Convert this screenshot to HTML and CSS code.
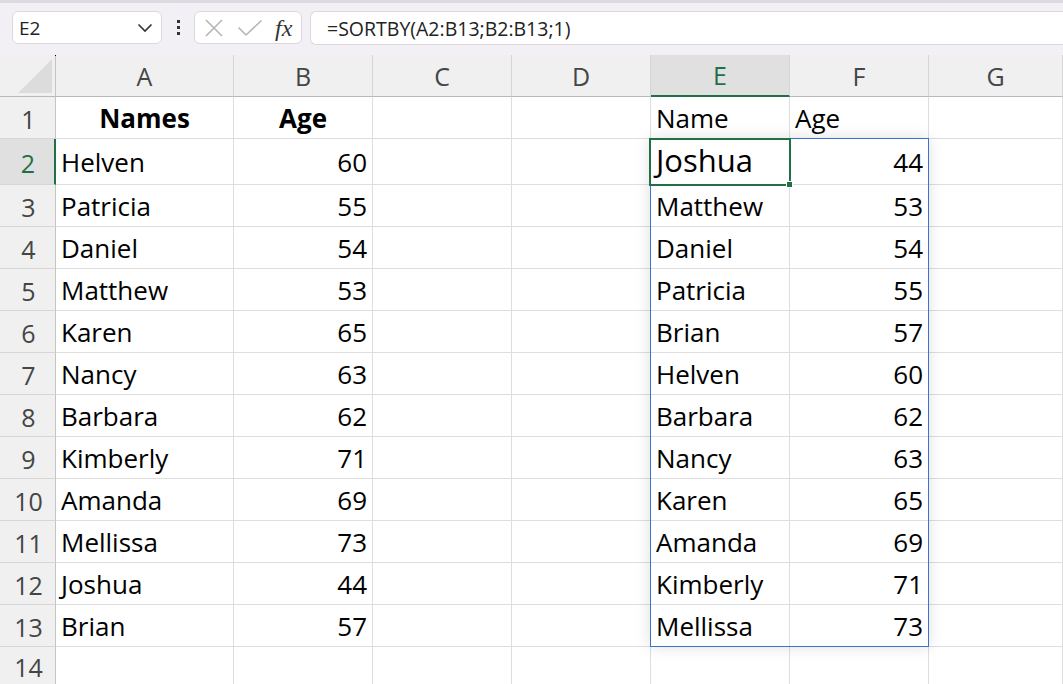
FILE: index.html
```html
<!DOCTYPE html>
<html>
<head>
<meta charset="utf-8">
<link rel="stylesheet" href="styles.css">
</head>
<body>
<div class="app">
  <div class="topline"></div>
  <div class="fbar">
    <div class="namebox">
      <span class="nb-text">E2</span>
      <svg class="chev" width="16" height="10" viewBox="0 0 16 10"><path d="M1.5 1.5 L8 8 L14.5 1.5" fill="none" stroke="#333" stroke-width="1.6"/></svg>
    </div>
    <div class="vdots"><span></span><span></span><span></span></div>
    <div class="iconbox">
      <svg width="20" height="20" viewBox="0 0 20 20"><path d="M2 2 L18 18 M18 2 L2 18" stroke="#b4b4b4" stroke-width="1.6" fill="none"/></svg>
      <svg width="26" height="18" viewBox="0 0 26 18"><path d="M1.5 8.5 L9 16 L24.5 1.5" stroke="#b4b4b4" stroke-width="1.6" fill="none"/></svg>
      <span class="fx">fx</span>
    </div>
    <div class="formula">=SORTBY(A2:B13;B2:B13;1)</div>
  </div>
  <div class="sheet">
    <div class="grid">
      <div class="corner"><div class="tri"></div></div>
      <div class="ch">A</div><div class="ch">B</div><div class="ch">C</div><div class="ch">D</div><div class="ch sel">E</div><div class="ch">F</div><div class="ch">G</div>

      <div class="rh">1</div>
      <div class="c bold ctr">Names</div><div class="c bold ctr">Age</div><div class="c"></div><div class="c"></div><div class="c">Name</div><div class="c">Age</div><div class="c"></div>

      <div class="rh sel">2</div>
      <div class="c r2">Helven</div><div class="c num r2">60</div><div class="c"></div><div class="c"></div><div class="c big">Joshua</div><div class="c num r2">44</div><div class="c"></div>

      <div class="rh">3</div>
      <div class="c">Patricia</div><div class="c num">55</div><div class="c"></div><div class="c"></div><div class="c">Matthew</div><div class="c num">53</div><div class="c"></div>

      <div class="rh">4</div>
      <div class="c">Daniel</div><div class="c num">54</div><div class="c"></div><div class="c"></div><div class="c">Daniel</div><div class="c num">54</div><div class="c"></div>

      <div class="rh">5</div>
      <div class="c">Matthew</div><div class="c num">53</div><div class="c"></div><div class="c"></div><div class="c">Patricia</div><div class="c num">55</div><div class="c"></div>

      <div class="rh">6</div>
      <div class="c">Karen</div><div class="c num">65</div><div class="c"></div><div class="c"></div><div class="c">Brian</div><div class="c num">57</div><div class="c"></div>

      <div class="rh">7</div>
      <div class="c">Nancy</div><div class="c num">63</div><div class="c"></div><div class="c"></div><div class="c">Helven</div><div class="c num">60</div><div class="c"></div>

      <div class="rh">8</div>
      <div class="c">Barbara</div><div class="c num">62</div><div class="c"></div><div class="c"></div><div class="c">Barbara</div><div class="c num">62</div><div class="c"></div>

      <div class="rh">9</div>
      <div class="c">Kimberly</div><div class="c num">71</div><div class="c"></div><div class="c"></div><div class="c">Nancy</div><div class="c num">63</div><div class="c"></div>

      <div class="rh">10</div>
      <div class="c">Amanda</div><div class="c num">69</div><div class="c"></div><div class="c"></div><div class="c">Karen</div><div class="c num">65</div><div class="c"></div>

      <div class="rh">11</div>
      <div class="c">Mellissa</div><div class="c num">73</div><div class="c"></div><div class="c"></div><div class="c">Amanda</div><div class="c num">69</div><div class="c"></div>

      <div class="rh">12</div>
      <div class="c">Joshua</div><div class="c num">44</div><div class="c"></div><div class="c"></div><div class="c">Kimberly</div><div class="c num">71</div><div class="c"></div>

      <div class="rh">13</div>
      <div class="c">Brian</div><div class="c num">57</div><div class="c"></div><div class="c"></div><div class="c">Mellissa</div><div class="c num">73</div><div class="c"></div>

      <div class="rh last">14</div>
      <div class="c"></div><div class="c"></div><div class="c"></div><div class="c"></div><div class="c"></div><div class="c"></div><div class="c"></div>
    </div>
    <div class="spill"></div>
    <div class="active"><div class="handle"></div></div>
    <div class="dot"></div>
  </div>
</div>
</body>
</html>
```
FILE: styles.css
```css
* { box-sizing: border-box; }
html, body { margin: 0; padding: 0; }
body { width: 1063px; height: 684px; overflow: hidden; background: #fff; font-family: "Open Sans", "Liberation Sans", sans-serif; }
.app { width: 1063px; height: 684px; overflow: hidden; display: flex; flex-direction: column; }
.topline { height: 3px; background: #dedae1; flex: none; }
.fbar { height: 52px; flex: none; background: #f3f0f5; display: flex; align-items: flex-start; padding: 8px 0 0 12px; }
.namebox { width: 150px; height: 33px; background: #fff; border: 1px solid #dcd8de; border-radius: 6px; display: flex; align-items: center; justify-content: space-between; padding: 0 8px 0 6px; }
.nb-text { font-family: "Open Sans", "Liberation Sans", sans-serif; font-size: 19px; color: #222; }
.vdots { width: 32px; height: 33px; display: flex; flex-direction: column; align-items: center; justify-content: center; gap: 3px; }
.vdots span { width: 3px; height: 3px; background: #333; }
.iconbox { width: 108px; height: 33px; background: #fff; border: 1px solid #dcd8de; border-radius: 6px; display: flex; align-items: center; padding: 0 6px 0 9px; gap: 0; }
.iconbox svg:first-child { margin-right: 13px; }
.iconbox svg:nth-child(2) { margin-right: 12px; }
.fx { font-family: "Liberation Serif", serif; font-style: italic; font-size: 24px; color: #333; line-height: 1; }
.formula { flex: 1; margin-left: 8px; height: 34px; background: #fff; border: 1px solid #dcd8de; border-right: none; border-radius: 6px 0 0 6px; display: flex; align-items: center; padding-left: 16px; font-family: "Open Sans", "Liberation Sans", sans-serif; font-size: 19.5px; color: #222; }
.sheet { position: relative; flex: 1; }
.grid { display: grid; grid-template-columns: 56px 178px 139px 139px 139px 139px 139px 134px; grid-template-rows: 42px 42px 46px repeat(11, 42px) 42px; }
.corner { background: #f0f0f0; border-right: 1px solid #c4c4c4; border-bottom: 1px solid #b9b9b9; position: relative; }
.tri { position: absolute; left: 18px; top: 4px; width: 34px; height: 34px; background: #dcdcdc; clip-path: polygon(100% 0, 100% 100%, 0 100%); }
.ch { background: #f0f0f0; border-right: 1px solid #d6d6d6; border-bottom: 1px solid #b9b9b9; display: flex; align-items: center; justify-content: center; font-family: "Open Sans", "Liberation Sans", sans-serif; font-size: 25px; color: #454545; }
.ch.sel { background: #e0e0e0; color: #1f7145; border-bottom: 2px solid #1f7145; }
.rh { background: #f0f0f0; border-right: 1px solid #c4c4c4; border-bottom: 1px solid #d6d6d6; display: flex; align-items: flex-end; justify-content: center; padding-bottom: 6px; padding-left: 2px; font-family: "Open Sans", "Liberation Sans", sans-serif; font-size: 25px; color: #454545; line-height: 1; }
.rh.sel { background: #e0e0e0; color: #1f7145; border-right: 2px solid #1f7145; padding-bottom: 8px; }
.rh.last { align-items: flex-start; padding-top: 8px; padding-bottom: 0; }
.c { border-right: 1px solid #dedede; border-bottom: 1px solid #dedede; display: flex; align-items: flex-end; padding: 0 5px 7px 5px; font-size: 26px; color: #000; line-height: 1; white-space: nowrap; overflow: visible; }
.c.r2 { padding-bottom: 9px; }
.c.num { justify-content: flex-end; }
.c.ctr { justify-content: center; }
.c.bold { font-weight: 700; }
.c.big { font-size: 31px; padding-bottom: 8px; }
.spill { position: absolute; left: 650px; top: 83px; width: 279px; height: 509px; border: 1px solid #3a72d0; box-shadow: 0 0 14px rgba(0,0,0,0.13); pointer-events: none; }
.active { position: absolute; left: 649px; top: 83px; width: 142px; height: 48px; border: 2px solid #1f7145; }
.handle { position: absolute; right: -4px; bottom: -4px; width: 7px; height: 7px; background: #1f7145; border: 1px solid #fff; }
.dot { position: absolute; left: 55px; top: 0; width: 1px; height: 1px; background: #000; }
```
